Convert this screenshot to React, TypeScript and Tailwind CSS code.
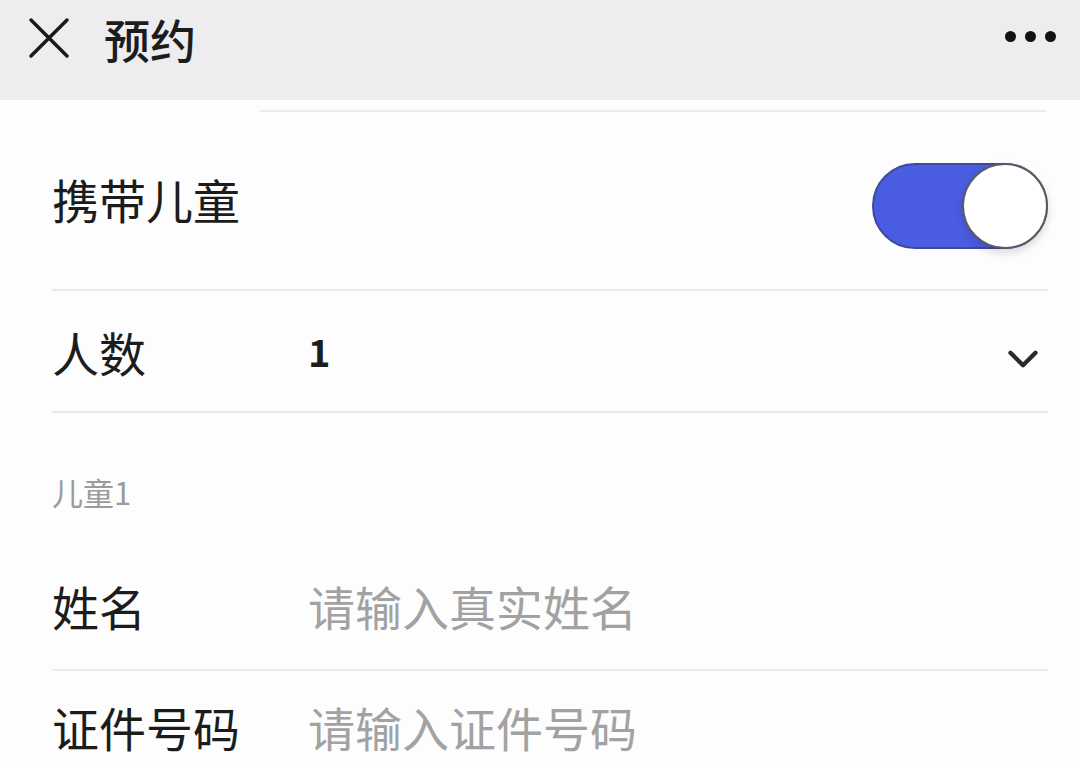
import { ChevronDown } from "lucide-react";

const font = { fontFamily: '"Noto Sans CJK SC", "Noto Sans", sans-serif' };

function Toggle() {
  return (
    <div className="relative mt-[8px] w-[176px] h-[86px] rounded-full bg-[#4a5de2] border-2 border-[#3f4a9a]">
      <div className="absolute right-[-2px] top-[-2px] w-[86px] h-[86px] rounded-full bg-white border-2 border-[#5a5a66] shadow-[0_4px_8px_rgba(0,0,0,0.15)]" />
    </div>
  );
}

export default function App() {
  return (
    <div className="w-[1080px] h-[766px] overflow-hidden bg-[#fdfdfd] text-[#1c1c1c]" style={font}>
      <div className="h-[100px] bg-[#ededf0] flex items-center pl-[28px] pr-[24px] pb-[24px]">
        <svg width="42" height="42" viewBox="0 0 42 42">
          <path d="M3 3 L39 39 M39 3 L3 39" stroke="#1a1a1a" strokeWidth="3.5" strokeLinecap="round" />
        </svg>
        <div className="ml-[34px] text-[46px] leading-none font-medium">预约</div>
        <div className="ml-auto flex gap-[9px] mb-[4px]">
          <span className="w-[11px] h-[11px] rounded-full bg-[#111]" />
          <span className="w-[11px] h-[11px] rounded-full bg-[#111]" />
          <span className="w-[11px] h-[11px] rounded-full bg-[#111]" />
        </div>
      </div>

      <div className="mt-[10px] ml-[260px] mr-[34px] h-[2px] bg-[#ebebed]" />

      <div className="pl-[52px] pr-[32px]">
        <div className="h-[177px] flex items-center justify-between pt-[2px]">
          <span className="text-[47px] leading-none mb-[6px]">携带儿童</span>
          <Toggle />
        </div>
        <div className="h-[2px] bg-[#e8e8ea]" />

        <div className="h-[120px] flex items-center">
          <span className="w-[256px] text-[47px] leading-none">人数</span>
          <span className="text-[38px] font-bold leading-none">1</span>
          <ChevronDown className="ml-auto mt-[16px] mr-[0px]" size={50} strokeWidth={2.1} color="#2a2a2a" />
        </div>
        <div className="h-[2px] bg-[#e8e8ea]" />

        <div className="pt-[62px] text-[31px] leading-[34px] text-[#9b9b9b]">儿童1</div>

        <div className="h-[128px] mt-[32px] flex items-center">
          <span className="w-[256px] text-[47px] leading-none">姓名</span>
          <span className="text-[47px] leading-none text-[#a2a2a2]">请输入真实姓名</span>
        </div>
        <div className="h-[2px] bg-[#ebebed]" />

        <div className="h-[110px] flex items-center">
          <span className="w-[256px] text-[47px] leading-none">证件号码</span>
          <span className="text-[47px] leading-none text-[#a2a2a2]">请输入证件号码</span>
        </div>
      </div>
    </div>
  );
}
